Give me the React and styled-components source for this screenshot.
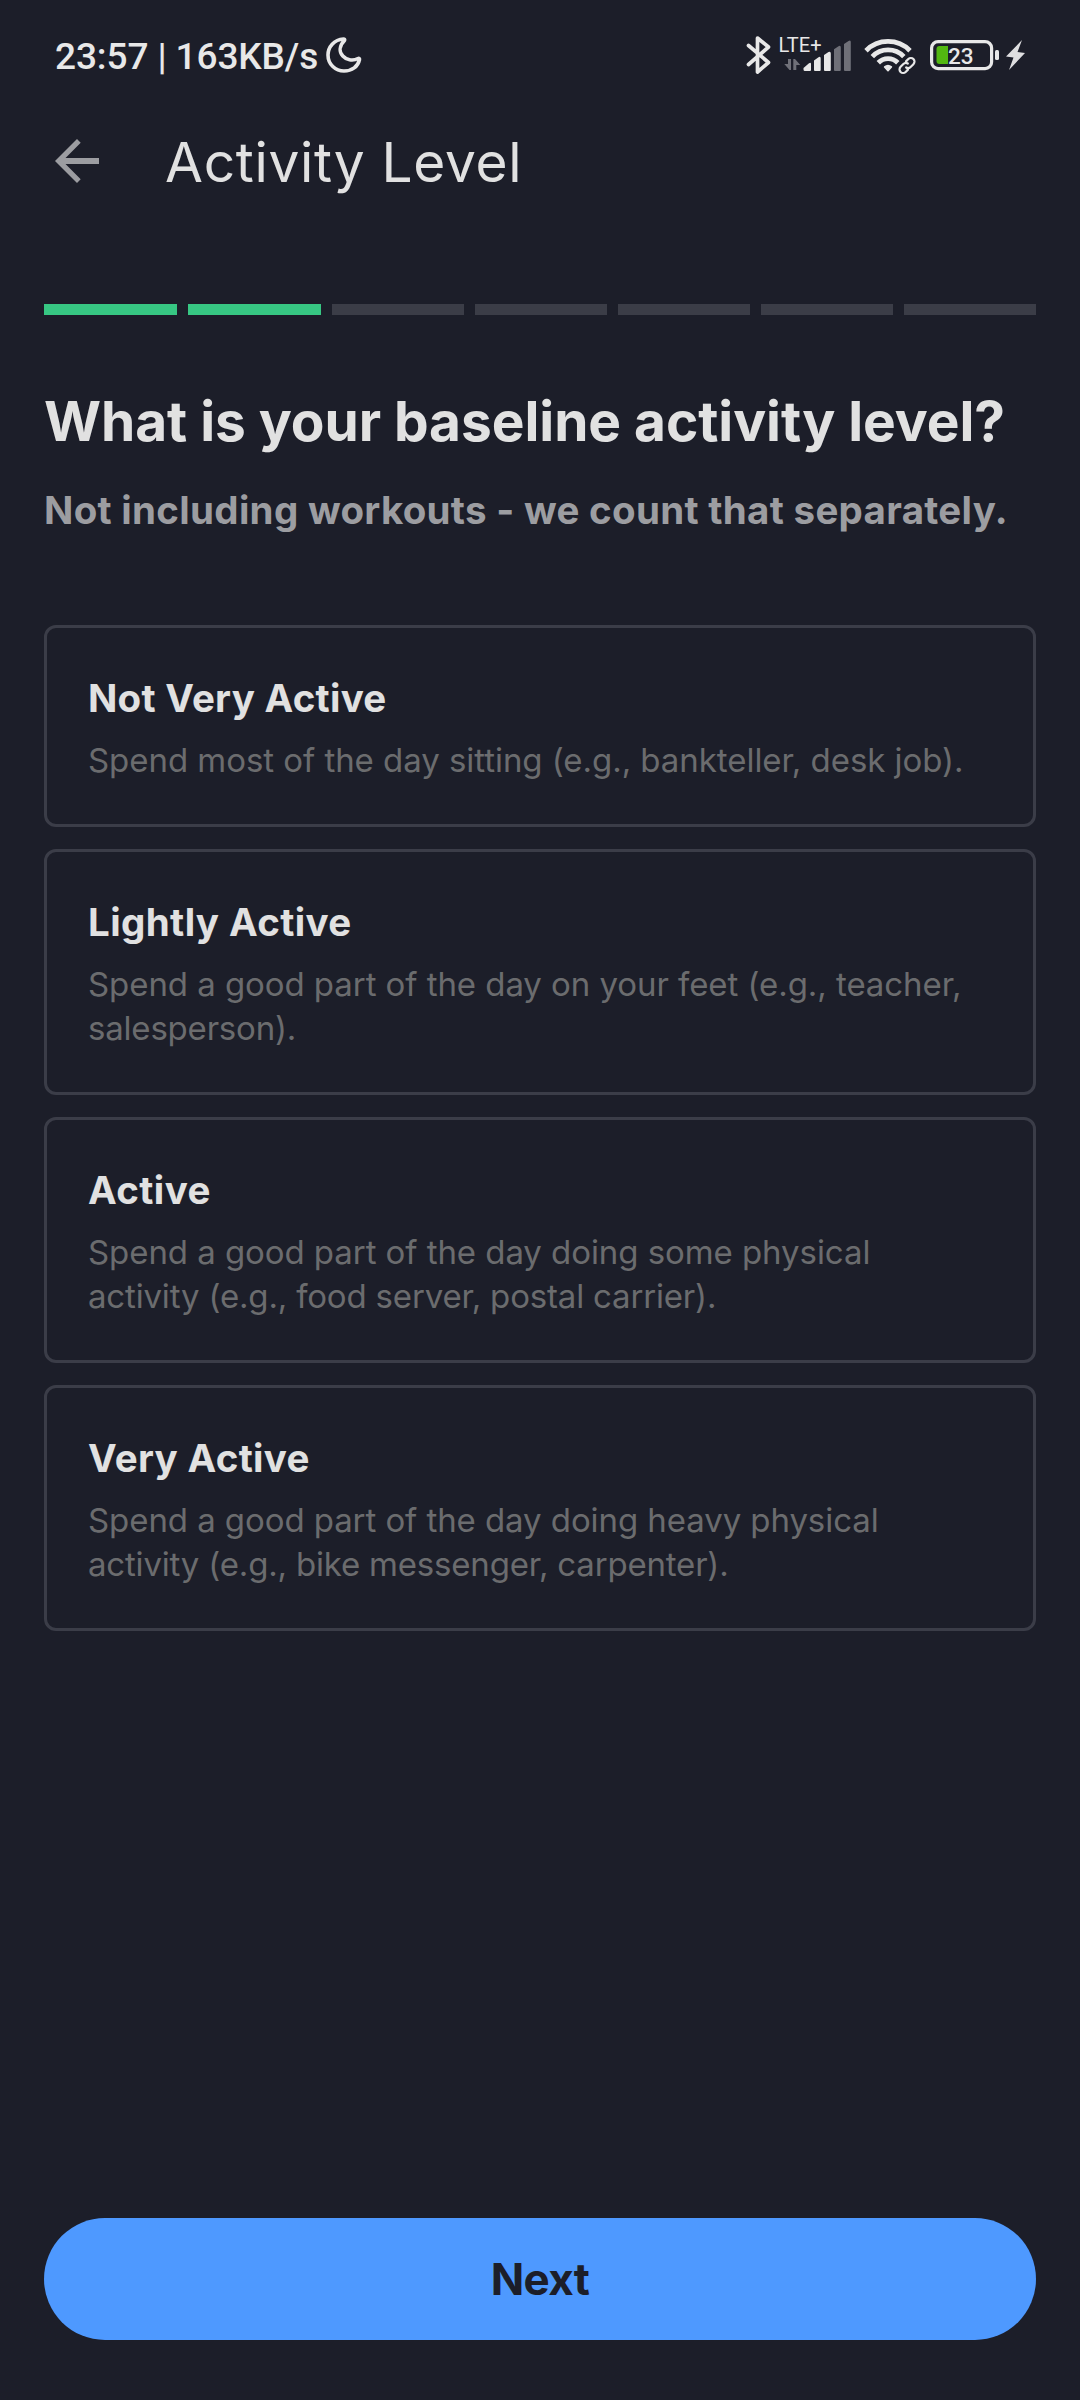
import React from "react";
import styled, { createGlobalStyle } from "styled-components";

const Global = createGlobalStyle`
  * { box-sizing: border-box; }
  body { margin: 0; background: #1c1e29; }
`;

const Screen = styled.div`
  width: 1080px;
  height: 2400px;
  display: flex;
  flex-direction: column;
  background: #1c1e29;
  color: #e1e1e1;
  font-family: Inter, "Liberation Sans", sans-serif;
`;

const StatusBar = styled.header`
  display: flex;
  justify-content: space-between;
  height: 110px;
  padding: 0 50px 0 55px;
`;

const StatusGroup = styled.div`
  display: flex;
  align-items: center;
  height: 110px;
`;

const Clock = styled.span`
  padding-top: 3px;
  font: 500 37px/44px Roboto, sans-serif;
  letter-spacing: -0.11px;
  color: #e8e8e8;
  white-space: nowrap;
`;

const TopBar = styled.div`
  display: flex;
  align-items: center;
  height: 102px;
  padding-left: 55px;
`;

const Title = styled.h1`
  margin: 0 0 0 66px;
  padding-top: 2px;
  font-size: 55px;
  line-height: 66px;
  font-weight: 400;
  letter-spacing: 0.68px;
  white-space: nowrap;
`;

const Progress = styled.div`
  display: grid;
  grid-template-columns: 133px 133px repeat(5, 132px);
  gap: 11px;
  height: 11px;
  margin: 92px 44px 0;
`;

const Segment = styled.div`
  background: ${(p) => (p.$done ? "#37c783" : "#3b3d47")};
`;

const Intro = styled.section`
  padding: 72px 44px 0;
`;

const Question = styled.h2`
  margin: 0;
  font-size: 55px;
  line-height: 68px;
  font-weight: 700;
  letter-spacing: -0.053px;
  white-space: nowrap;
`;

const Hint = styled.p`
  margin: 31px 0 0;
  font-size: 38.5px;
  line-height: 48px;
  font-weight: 700;
  letter-spacing: 0.298px;
  color: #9c9da1;
  white-space: nowrap;
`;

const Options = styled.div`
  display: flex;
  flex-direction: column;
  gap: 22px;
  margin: 91px 44px 0;
`;

const Option = styled.button`
  border: 3px solid #3b3d48;
  border-radius: 12px;
  padding: 41px 41px 42px;
  background: none;
  color: inherit;
  font-family: inherit;
  text-align: left;
`;

const OptionTitle = styled.div`
  font-size: 38.5px;
  line-height: 58px;
  font-weight: 700;
  letter-spacing: ${(p) => p.$tracking}px;
`;

const OptionText = styled.div`
  margin-top: 11px;
  font-size: 33px;
  line-height: 44px;
  color: #6b6c6e;
  white-space: nowrap;
`;

const Line = styled.div`
  letter-spacing: ${(p) => p.$tracking}px;
`;

const Footer = styled.footer`
  margin: auto 44px 60px;
  display: flex;
`;

const NextButton = styled.button`
  flex: 1;
  height: 122px;
  border: 0;
  border-radius: 61px;
  background: #4e99ff;
  color: #1c1e29;
  font: 700 44px/54px Inter, sans-serif;
  letter-spacing: -0.6px;
`;

const Icon = styled.svg`
  display: block;
  flex: none;
`;

const MoonIcon = styled(Icon)`
  margin-left: 7.5px;
`;

const StatusIcons = () => (
  <Icon width="300" height="70" viewBox="730 20 300 70" fill="none">
    <path d="M748.5 45.5 L768.5 62.5 L757.5 72 V38 L768.5 47 L748.5 64.5" stroke="#e8e8e8" strokeWidth="3.7" strokeLinejoin="round" strokeLinecap="round" />
    <text x="778.5" y="52" fill="#e8e8e8" fontFamily="Roboto" fontSize="20" textLength="43">LTE+</text>
    <path d="M788 59 H791 V70 H789.500 L784.300 64 H788 Z M793.300 70 V59 H795 L800.300 65 H796.300 V70 Z" fill="#6f7078" />
    <path d="M805 71 a1.500 1.500 0 0 1 -1.500 -1.500 V68 L809 63.300 Q811 62 811 64 V70 a1 1 0 0 1 -1 1 Z M814 60.500 L818.500 57.300 Q820.700 56 820.700 58.500 V70 a1 1 0 0 1 -1 1 H815 a1 1 0 0 1 -1 -1 Z M824 55 L828.500 52 Q830.800 50.800 830.800 53.500 V70 a1 1 0 0 1 -1 1 H825 a1 1 0 0 1 -1 -1 Z" fill="#e8e8e8" />
    <path d="M834 49.300 L838.500 46.300 Q840.800 45 840.800 47.500 V70 a1 1 0 0 1 -1 1 H835 a1 1 0 0 1 -1 -1 Z M844 44 L848.500 41 Q850.800 39.500 850.800 42 V70 a1 1 0 0 1 -1 1 H845 a1 1 0 0 1 -1 -1 Z" fill="#6f7078" />
    <g stroke="#e8e8e8" strokeWidth="4.8">
      <path d="M866 50.700 a30.800 30.800 0 0 1 44 0" />
      <path d="M872.300 56.600 a22 22 0 0 1 31.500 0" />
      <path d="M878.300 62.700 a13.700 13.700 0 0 1 19.500 0" />
    </g>
    <path d="M888 70.700 L884.600 67 a5.500 5.500 0 0 1 6.800 0 Z" fill="#e8e8e8" stroke="#e8e8e8" strokeWidth="1.600" strokeLinejoin="round" />
    <g transform="rotate(-45 907 65.500)" stroke="#1c1e29" strokeWidth="7">
      <path d="M899.500 65.500 H914.500" />
    </g>
    <g transform="rotate(-45 907 65.500)" stroke="#e8e8e8" strokeWidth="2.200" strokeLinecap="round">
      <path d="M904.800 69.100 H901.500 a3.600 3.600 0 0 1 0 -7.200 H905.500 a3.600 3.600 0 0 1 3.500 2.800" />
      <path d="M909.200 61.900 H912.500 a3.600 3.600 0 0 1 0 7.200 H908.500 a3.600 3.600 0 0 1 -3.500 -2.800" />
    </g>
    <rect x="931.600" y="41.600" width="60" height="27" rx="6.500" stroke="#e8e8e8" strokeWidth="3.200" />
    <path d="M948 46 V64 H939.500 a3 3 0 0 1 -3 -3 V49 a3 3 0 0 1 3 -3 Z" fill="#52b811" />
    <text x="948" y="64" fill="#e8e8e8" fontFamily="Roboto" fontSize="22.500" fontWeight="500" textLength="25.500">23</text>
    <rect x="995" y="50" width="4" height="10" rx="1.500" fill="#e8e8e8" />
    <path d="M1022 40 L1006 56.500 L1013.500 57.500 L1009 70 L1025 53 L1017.500 52 Z" fill="#dedee0" />
  </Icon>
);

const options = [
  {
    title: "Not Very Active",
    tracking: 0.27,
    lines: [["Spend most of the day sitting (e.g., bankteller, desk job).", -0.048]],
  },
  {
    title: "Lightly Active",
    tracking: 0.39,
    lines: [
      ["Spend a good part of the day on your feet (e.g., teacher,", -0.066],
      ["salesperson).", -0.2],
    ],
  },
  {
    title: "Active",
    tracking: 0.4,
    lines: [
      ["Spend a good part of the day doing some physical", -0.066],
      ["activity (e.g., food server, postal carrier).", -0.173],
    ],
  },
  {
    title: "Very Active",
    tracking: 0.32,
    lines: [
      ["Spend a good part of the day doing heavy physical", -0.077],
      ["activity (e.g., bike messenger, carpenter).", -0.188],
    ],
  },
];

export default function App() {
  return (
    <Screen>
      <Global />
      <StatusBar>
        <StatusGroup>
          <Clock>23:57 | 163KB/s</Clock>
          <MoonIcon width="36" height="36" viewBox="0 0 36 36" fill="none">
            <path d="M17.500 2 C8 2.500 2 10 2 18 C2 27.500 9.500 34 18 34 C26 34 32 29.500 33.500 22.500 C33.700 21.500 33 21 32 21.500 C21 27.500 7 15 18.500 3.500 C19 2.500 18.500 2 17.500 2 Z" stroke="#e8e8e8" strokeWidth="3.600" strokeLinejoin="round" />
          </MoonIcon>
        </StatusGroup>
        <StatusGroup>
          <StatusIcons />
        </StatusGroup>
      </StatusBar>
      <TopBar>
        <Icon width="44" height="44" viewBox="0 0 44 44">
          <path d="M22 0 L25.700 3.700 L10.500 19 H44 V25 H10.500 L25.700 40.300 L22 44 L0 22 Z" fill="#9c9da1" />
        </Icon>
        <Title>Activity Level</Title>
      </TopBar>
      <Progress>
        {[0, 1, 2, 3, 4, 5, 6].map((i) => (
          <Segment key={i} $done={i < 2} />
        ))}
      </Progress>
      <Intro>
        <Question>What is your baseline activity level?</Question>
        <Hint>Not including workouts - we count that separately.</Hint>
      </Intro>
      <Options>
        {options.map(({ title, tracking, lines }) => (
          <Option key={title}>
            <OptionTitle $tracking={tracking}>{title}</OptionTitle>
            <OptionText>
              {lines.map(([text, lineTracking]) => (
                <Line key={text} $tracking={lineTracking}>{text}</Line>
              ))}
            </OptionText>
          </Option>
        ))}
      </Options>
      <Footer>
        <NextButton>Next</NextButton>
      </Footer>
    </Screen>
  );
}
